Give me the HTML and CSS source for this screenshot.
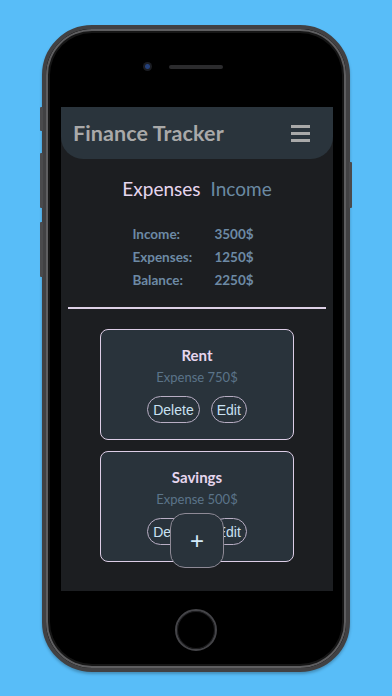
FILE: index.html
```html
<!DOCTYPE html>
<html lang="en">
<head>
    <meta charset="UTF-8">
    <meta name="viewport" content="width=device-width, initial-scale=1.0">
    <title>Finance Tracker</title>
    <link rel="stylesheet" href="styles.css">
</head>
<body>
    <div class="phone">
        <span class="side-btn mute"></span>
        <span class="side-btn vol-up"></span>
        <span class="side-btn vol-down"></span>
        <span class="side-btn power"></span>
        <div class="bezel-top">
            <span class="camera"></span>
            <span class="speaker"></span>
        </div>
        <div class="screen">
            <div class="header">
                <h1>Finance Tracker</h1>
                <div class="menu">
                    <span></span>
                    <span></span>
                    <span></span>
                </div>
            </div>
            <div class="tabs">
                <span class="tab active">Expenses</span>
                <span class="tab">Income</span>
            </div>
            <div class="stats">
                <span>Income:</span><span>3500$</span>
                <span>Expenses:</span><span>1250$</span>
                <span>Balance:</span><span>2250$</span>
            </div>
            <hr class="divider">
            <div class="list">
                <div class="card">
                    <h2>Rent</h2>
                    <p>Expense 750$</p>
                    <div class="actions">
                        <button class="pill">Delete</button>
                        <button class="pill">Edit</button>
                    </div>
                </div>
                <div class="card">
                    <h2>Savings</h2>
                    <p>Expense 500$</p>
                    <div class="actions">
                        <button class="pill">Delete</button>
                        <button class="pill">Edit</button>
                    </div>
                </div>
            </div>
            <button class="fab">+</button>
        </div>
        <div class="bezel-bottom">
            <span class="home"></span>
        </div>
    </div>
</body>
</html>
```

FILE: styles.css
```css
body {
    margin: 0;
    padding: 0;
    background-color: #58bdf8;
    font-family: Lato, "Noto Sans", sans-serif;
    height: 696px;
    overflow: hidden;
}

.phone {
    position: relative;
    width: 300px;
    height: 639px;
    margin: 25px auto 0;
    background-color: #000;
    border: 4px solid #414143;
    border-radius: 50px;
    box-shadow: inset 0 0 0 2px #5e5e60, inset 0 0 0 4px #161616, 0 2px 3px rgba(0, 0, 0, 0.25);
    display: flex;
    flex-direction: column;
    align-items: center;
}

.side-btn {
    position: absolute;
    width: 3px;
    background-color: #4a4a4c;
    border-radius: 1px;
}

.mute {
    left: -6px;
    top: 78px;
    height: 24px;
}

.vol-up {
    left: -6px;
    top: 124px;
    height: 55px;
}

.vol-down {
    left: -6px;
    top: 193px;
    height: 55px;
}

.power {
    right: -6px;
    top: 133px;
    height: 46px;
}

.bezel-top {
    height: 78px;
    width: 100%;
    display: flex;
    justify-content: center;
    align-items: center;
    gap: 17px;
}

.camera {
    width: 9px;
    height: 9px;
    border-radius: 50%;
    background: radial-gradient(circle, #24407a 0 2px, #1a1c22 3px);
    margin-left: -26px;
    margin-top: -3px;
}

.speaker {
    width: 54px;
    height: 4px;
    border-radius: 2px;
    background-color: #2b2b2d;
    margin-top: -3px;
}

.screen {
    position: relative;
    width: 272px;
    height: 484px;
    margin-left: 2px;
    background-color: #1c1e21;
    overflow: hidden;
    display: flex;
    flex-direction: column;
    align-items: center;
}

.header {
    width: 100%;
    height: 52px;
    box-sizing: border-box;
    background-color: #2a343c;
    border-radius: 0 0 22px 22px;
    display: flex;
    align-items: center;
    justify-content: space-between;
    padding: 0 23px 0 12px;
}

.header h1 {
    margin: 0;
    font-size: 21.5px;
    font-weight: 700;
    color: #a9a9a9;
    letter-spacing: 0.1px;
}

.menu {
    display: flex;
    flex-direction: column;
    gap: 4px;
}

.menu span {
    display: block;
    width: 19px;
    height: 3px;
    background-color: #a9a9a9;
}

.tabs {
    display: flex;
    gap: 10px;
    margin-top: 18px;
    font-size: 19px;
}

.tab {
    color: #6b8aa3;
}

.tab.active {
    color: #e6d6ee;
}

.stats {
    display: grid;
    grid-template-columns: 82px auto;
    row-gap: 7px;
    margin-top: 26px;
    margin-left: -8px;
    font-size: 13.5px;
    font-weight: 700;
    color: #6d8aa5;
}

.divider {
    width: 258px;
    margin: 19px 0 0;
    border: none;
    height: 2px;
    background-color: #ddd0e6;
}

.list {
    display: flex;
    flex-direction: column;
    gap: 11px;
    margin-top: 20px;
}

.card {
    width: 194px;
    height: 111px;
    box-sizing: border-box;
    background-color: #29333b;
    border: 1.5px solid #dccde6;
    border-radius: 8px;
    display: flex;
    flex-direction: column;
    align-items: center;
    padding-top: 16px;
}

.card h2 {
    margin: 0;
    font-size: 15px;
    font-weight: 700;
    color: #e6d6ee;
}

.card p {
    margin: 5px 0 0;
    font-size: 13px;
    color: #5b7489;
}

.actions {
    display: flex;
    gap: 11px;
    margin-top: 11px;
}

.pill {
    height: 27px;
    padding: 0 5px;
    background: transparent;
    border: 1.5px solid #b8aec4;
    border-radius: 14px;
    color: #c9e1f2;
    font-family: "Liberation Sans", Arial, sans-serif;
    font-size: 14px;
}

.fab {
    position: absolute;
    left: 109px;
    bottom: 23px;
    width: 54px;
    height: 55px;
    background-color: #29333b;
    border: 1.5px solid #8e8a96;
    border-radius: 15px;
    color: #d4ecfb;
    font-family: "Liberation Sans", Arial, sans-serif;
    font-size: 24px;
    padding: 0;
}

.bezel-bottom {
    flex: 1;
    display: flex;
    align-items: center;
    justify-content: center;
}

.home {
    width: 38px;
    height: 38px;
    border-radius: 50%;
    border: 2px solid #444448;
    box-shadow: inset 0 0 0 1px #1e1e20;
}
```
